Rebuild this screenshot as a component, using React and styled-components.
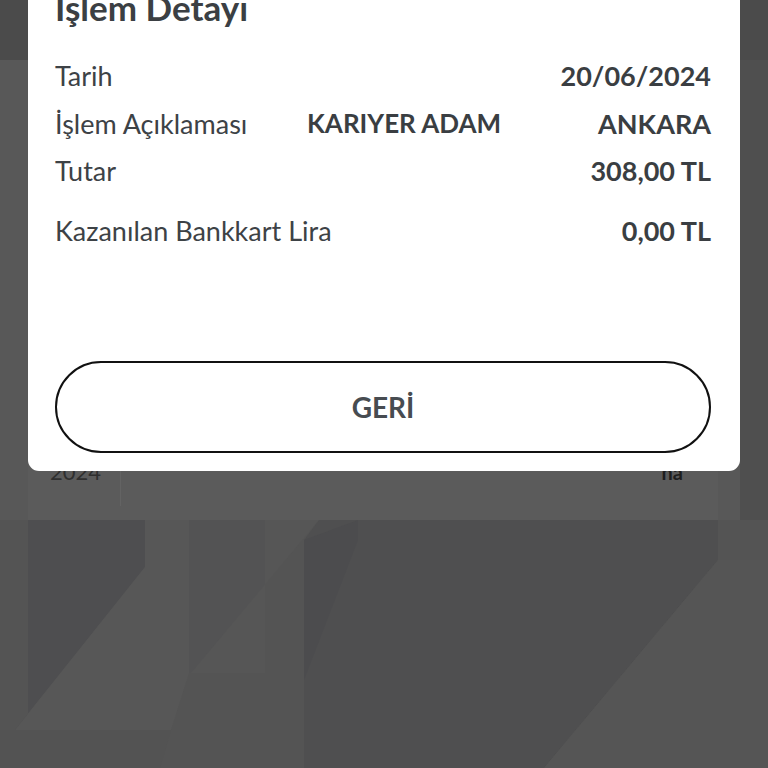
import React from "react";
import styled, { createGlobalStyle } from "styled-components";

const Global = createGlobalStyle`
  html, body {
    margin: 0;
    padding: 0;
    background: #555555;
  }
  * { box-sizing: border-box; }
`;

const Screen = styled.div`
  position: relative;
  width: 768px;
  height: 768px;
  overflow: hidden;
  background: #555555;
  font-family: "Lato", "Noto Sans", sans-serif;
`;

const Backdrop = styled.div`
  display: flex;
  flex-direction: column;
`;

const TopBand = styled.div`
  height: 60px;
  background: #4b4b4b;
`;

const Middle = styled.div`
  display: flex;
  height: 460px;
`;

const MainCol = styled.div`
  flex: 1;
  display: flex;
  flex-direction: column;
  justify-content: flex-end;
  background: #585858;
`;

const Rail = styled.div`
  width: 28px;
  background: #4f4f4f;
`;

const ListRow = styled.div`
  display: flex;
  align-items: flex-start;
  width: 690px;
  height: 90px;
  margin-left: 28px;
  padding-top: 30px;
  background: #5b5b5b;
`;

const YearCell = styled.div`
  width: 93px;
  height: 46px;
  padding-left: 22px;
  border-right: 1px solid #636363;
  font-size: 22px;
  line-height: 24px;
  color: #2f2f2f;
`;

const RowTail = styled.div`
  margin-left: auto;
  margin-right: 35px;
  font-size: 20px;
  line-height: 24px;
  font-weight: 700;
  color: #1e1e1e;
`;

const Decor = styled.svg`
  display: block;
  width: 768px;
  height: 248px;
`;

const Modal = styled.div`
  position: absolute;
  top: -10px;
  left: 28px;
  width: 712px;
  background: #ffffff;
  border-radius: 0 0 11px 11px;
  padding: 0 29px 18px 27px;
  display: flex;
  flex-direction: column;
`;

const Title = styled.h2`
  margin: -3px 0 25px;
  font-size: 35px;
  line-height: 40px;
  font-weight: 700;
  color: #3b3f43;
`;

const InfoRow = styled.div`
  display: grid;
  grid-template-columns: ${(p) => (p.three ? "252px 1fr auto" : "1fr auto")};
  align-items: center;
  height: ${(p) => (p.tall ? "60px" : "47.5px")};
  padding-top: ${(p) => (p.tall ? "12px" : "0")};
  font-size: 27px;
  color: #3d4246;
`;

const Label = styled.span`
  font-weight: 400;
`;

const Value = styled.span`
  font-weight: 700;
  text-align: right;
  color: #3a3e42;
`;

const Middle2 = styled.span`
  font-weight: 700;
  font-size: 26px;
  color: #3a3e42;
`;

const BackButton = styled.button`
  margin-top: 106px;
  height: 92px;
  width: 100%;
  border: 2px solid #111111;
  border-radius: 46px;
  background: #ffffff;
  font-family: "Lato", "Noto Sans", sans-serif;
  font-size: 28px;
  font-weight: 700;
  color: #474c51;
  cursor: pointer;
`;

export default function App() {
  return (
    <Screen>
      <Global />
      <Backdrop>
        <TopBand />
        <Middle>
          <MainCol>
            <ListRow>
              <YearCell>2024</YearCell>
              <RowTail>ha</RowTail>
            </ListRow>
          </MainCol>
          <Rail />
        </Middle>
        <Decor viewBox="0 0 768 248">
          <rect x="0" y="0" width="768" height="248" fill="#545454" />
          <polygon points="28,0 145,0 145,47 15,210 28,210" fill="#4e4e50" />
          <polygon points="145,0 189,0 189,153 171,210 15,210 145,47" fill="#575757" />
          <polygon points="189,0 265,0 265,153 189,153" fill="#535354" />
          <polygon points="265,0 319,0 191,153 265,153" fill="#565656" />
          <polygon points="319,0 718,0 718,40 544,248 304,248 304,20" fill="#4f4f50" />
          <polygon points="304,20 358,0 358,20 304,160" fill="#4c4c4e" />
          <polygon points="718,40 768,40 768,248 544,248" fill="#555555" />
          <polygon points="0,210 171,210 160,248 0,248" fill="#535353" />
        </Decor>
      </Backdrop>
      <Modal>
        <Title>İşlem Detayı</Title>
        <InfoRow>
          <Label>Tarih</Label>
          <Value>20/06/2024</Value>
        </InfoRow>
        <InfoRow three>
          <Label>İşlem Açıklaması</Label>
          <Middle2>KARIYER ADAM</Middle2>
          <Value>ANKARA</Value>
        </InfoRow>
        <InfoRow>
          <Label>Tutar</Label>
          <Value>308,00 TL</Value>
        </InfoRow>
        <InfoRow tall>
          <Label>Kazanılan Bankkart Lira</Label>
          <Value>0,00 TL</Value>
        </InfoRow>
        <BackButton>GERİ</BackButton>
      </Modal>
    </Screen>
  );
}
